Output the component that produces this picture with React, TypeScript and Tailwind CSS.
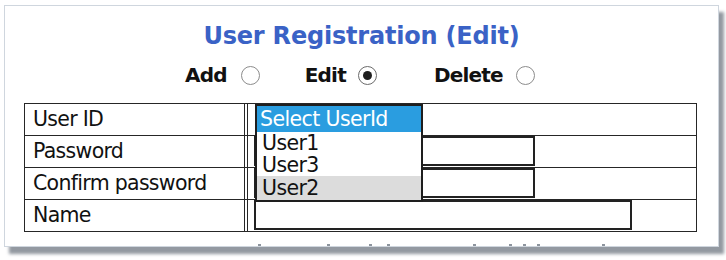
import React from "react";

function Radio({ checked }: { checked?: boolean }) {
  return (
    <span
      className={
        "flex h-[19px] w-[19px] items-center justify-center rounded-full border bg-white " +
        (checked ? "border-[#6b6b6b]" : "border-[#8c8c8c]")
      }
    >
      {checked && <span className="h-[9px] w-[9px] rounded-full bg-[#1f1f1f]" />}
    </span>
  );
}

function Row({
  label,
  children,
}: {
  label: string;
  children?: React.ReactNode;
}) {
  return (
    <div className="flex h-[32px] border-b border-[#262626]">
      <div className="flex w-[220px] items-center border-r border-[#262626] pl-[8px] text-[20.5px] leading-[31px] tracking-[-0.7px] text-[#111]">
        {label}
      </div>
      <div className="w-[2px]" />
      <div className="flex flex-1 items-start border-l border-[#262626] pl-[6px]">
        {children}
      </div>
    </div>
  );
}

export default function App() {
  const dots = [258, 327, 369, 387, 473, 509, 523, 537, 602];
  return (
    <div className="h-[260px] w-[726px] overflow-hidden bg-white font-['DejaVu_Sans',sans-serif]">
      <div className="ml-[4px] mt-[5px] h-[242px] w-[715px] overflow-hidden border border-[#cfd6de] bg-white shadow-[5px_7px_3px_rgba(120,128,138,0.8)]">
        <div className="pt-[16px] text-center text-[24px] font-bold leading-[28px] tracking-[-0.2px] text-[#3a62c6]">
          User Registration (Edit)
        </div>
        <div className="mt-[13px] flex h-[24px] items-center pl-[180px] text-[20px] font-bold leading-[24px] tracking-[-0.8px] text-[#111]">
          <span>Add</span>
          <span className="ml-[14px]">
            <Radio />
          </span>
          <span className="ml-[45px]">Edit</span>
          <span className="ml-[12px]">
            <Radio checked />
          </span>
          <span className="ml-[57px]">Delete</span>
          <span className="ml-[13px]">
            <Radio />
          </span>
        </div>
        <div className="relative ml-[19px] mt-[16px] w-[673px] border-x border-t border-[#262626]">
          <Row label="User ID" />
          <Row label="Password">
            <div className="h-[30px] w-[281px] border-2 border-[#222]" />
          </Row>
          <Row label="Confirm password">
            <div className="h-[30px] w-[281px] border-2 border-[#222]" />
          </Row>
          <Row label="Name">
            <div className="h-[30px] w-[378px] border-2 border-[#222]" />
          </Row>
          <div className="absolute left-[230px] top-0 w-[168px] border-2 border-[#1e1e1e] bg-white text-[20.5px] tracking-[-0.6px] text-[#111]">
            <div className="h-[26px] bg-[#2a9de0] pl-[3px] leading-[26px] text-white">Select UserId</div>
            <div className="h-[22px] pl-[5px] leading-[22px]">User1</div>
            <div className="h-[22px] pl-[5px] leading-[22px]">User3</div>
            <div className="h-[24px] bg-[#dcdcdc] pl-[5px] leading-[24px]">User2</div>
          </div>
        </div>
        <div className="mt-[12px] flex h-[2px]">
          {dots.map((x, i) => (
            <span
              key={i}
              className="h-[2px] w-[3px] bg-[#8e959e]"
              style={{ marginLeft: i === 0 ? x - 5 : x - dots[i - 1] - 3 }}
            />
          ))}
        </div>
      </div>
    </div>
  );
}
